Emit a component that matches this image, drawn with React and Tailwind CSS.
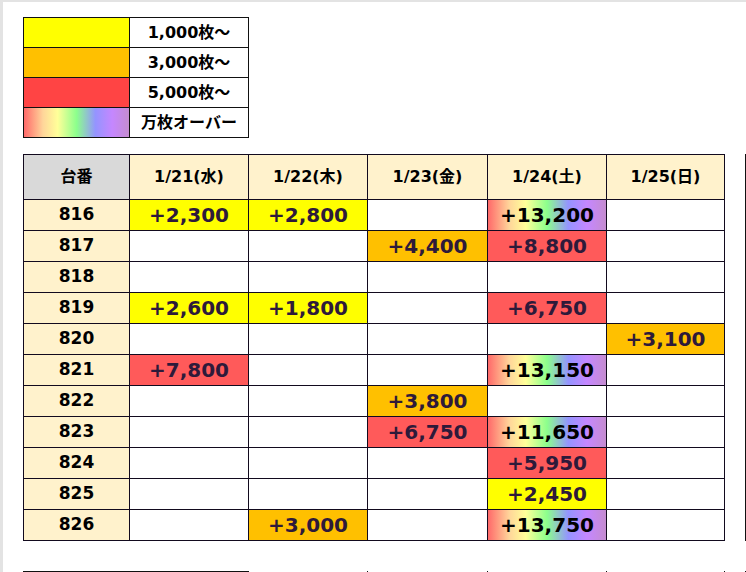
import React from "react";

const Y = "bg-[#ffff00]";
const O = "bg-[#ffc000]";
const R = "bg-[#ff5a5a]";
const RB = "rb";

const rows = [
  ["816", [["+2,300", Y], ["+2,800", Y], null, ["+13,200", RB], null]],
  ["817", [null, null, ["+4,400", O], ["+8,800", R], null]],
  ["818", [null, null, null, null, null]],
  ["819", [["+2,600", Y], ["+1,800", Y], null, ["+6,750", R], null]],
  ["820", [null, null, null, null, ["+3,100", O]]],
  ["821", [["+7,800", R], null, null, ["+13,150", RB], null]],
  ["822", [null, null, ["+3,800", O], null, null]],
  ["823", [null, null, ["+6,750", R], ["+11,650", RB], null]],
  ["824", [null, null, null, ["+5,950", R], null]],
  ["825", [null, null, null, ["+2,450", Y], null]],
  ["826", [null, ["+3,000", O], null, ["+13,750", RB], null]],
];

const dates = ["1/21(水)", "1/22(木)", "1/23(金)", "1/24(土)", "1/25(日)"];
const rainbow =
  "bg-[linear-gradient(90deg,#ff6a6a_0%,#ffd59a_18%,#ffff99_32%,#8cff8c_50%,#9494ff_68%,#c587ff_84%,#c58cd0_100%)]";

const font = "font-['DejaVu_Sans','Noto_Sans_CJK_JP',sans-serif]";

export default function App() {
  return (
    <div className={`w-[746px] h-[572px] overflow-hidden bg-white border-t-2 border-l-[3px] border-[#e3e3e3] ${font}`}>
      <div className="pl-[20px] pt-[15px] flex flex-col">
        {/* legend */}
        <div className="grid grid-cols-[105px_118px] auto-rows-[29px] gap-px p-px bg-[#111] w-[226px]">
          <div className="bg-[#ffff00]" />
          <div className="bg-white flex items-center justify-center text-[16px] font-bold text-black">1,000枚〜</div>
          <div className="bg-[#ffc000]" />
          <div className="bg-white flex items-center justify-center text-[16px] font-bold text-black">3,000枚〜</div>
          <div className="bg-[#ff4444]" />
          <div className="bg-white flex items-center justify-center text-[16px] font-bold text-black">5,000枚〜</div>
          <div className={rainbow} />
          <div className="bg-white flex items-center justify-center text-[16px] font-bold text-black">万枚オーバー</div>
        </div>

        {/* main table */}
        <div className="mt-[16px] flex items-start">
          <div className="grid grid-cols-[105px_118px_118px_119px_118px_117px] grid-rows-[44px_repeat(11,30px)] gap-px p-px bg-[#120a1e] w-[702px]">
            <div className="bg-[#d9d9d9] flex items-center justify-center text-[16px] font-bold text-black">台番</div>
            {dates.map((d) => (
              <div key={d} className="bg-[#fff2cc] flex items-center justify-center text-[16px] font-bold text-black">{d}</div>
            ))}
            {rows.map(([no, cells]) => (
              <React.Fragment key={no}>
                <div className="bg-[#fff2cc] flex items-center justify-center text-[17px] font-bold text-black">{no}</div>
                {cells.map((c, i) =>
                  c ? (
                    <div
                      key={i}
                      className={`${c[1] === RB ? rainbow + " text-black" : c[1] + " text-[#2e1a3a]"} flex items-center justify-center text-[20px] font-bold leading-none`}
                    >
                      {c[0]}
                    </div>
                  ) : (
                    <div key={i} className="bg-white" />
                  )
                )}
              </React.Fragment>
            ))}
          </div>
          <div className="ml-[20px] w-px h-[387px] bg-[#111]" />
        </div>

        {/* next table top edge */}
        <div className="mt-[30px] flex h-px items-start">
          <div className="w-[226px] h-px bg-[#111]" />
          <div className="ml-[118px] w-px h-px bg-[#111]" />
          <div className="ml-[119px] w-px h-px bg-[#111]" />
          <div className="ml-[118px] w-px h-px bg-[#111]" />
          <div className="ml-[117px] w-px h-px bg-[#111]" />
          <div className="ml-[20px] w-px h-px bg-[#111]" />
        </div>
      </div>
    </div>
  );
}
